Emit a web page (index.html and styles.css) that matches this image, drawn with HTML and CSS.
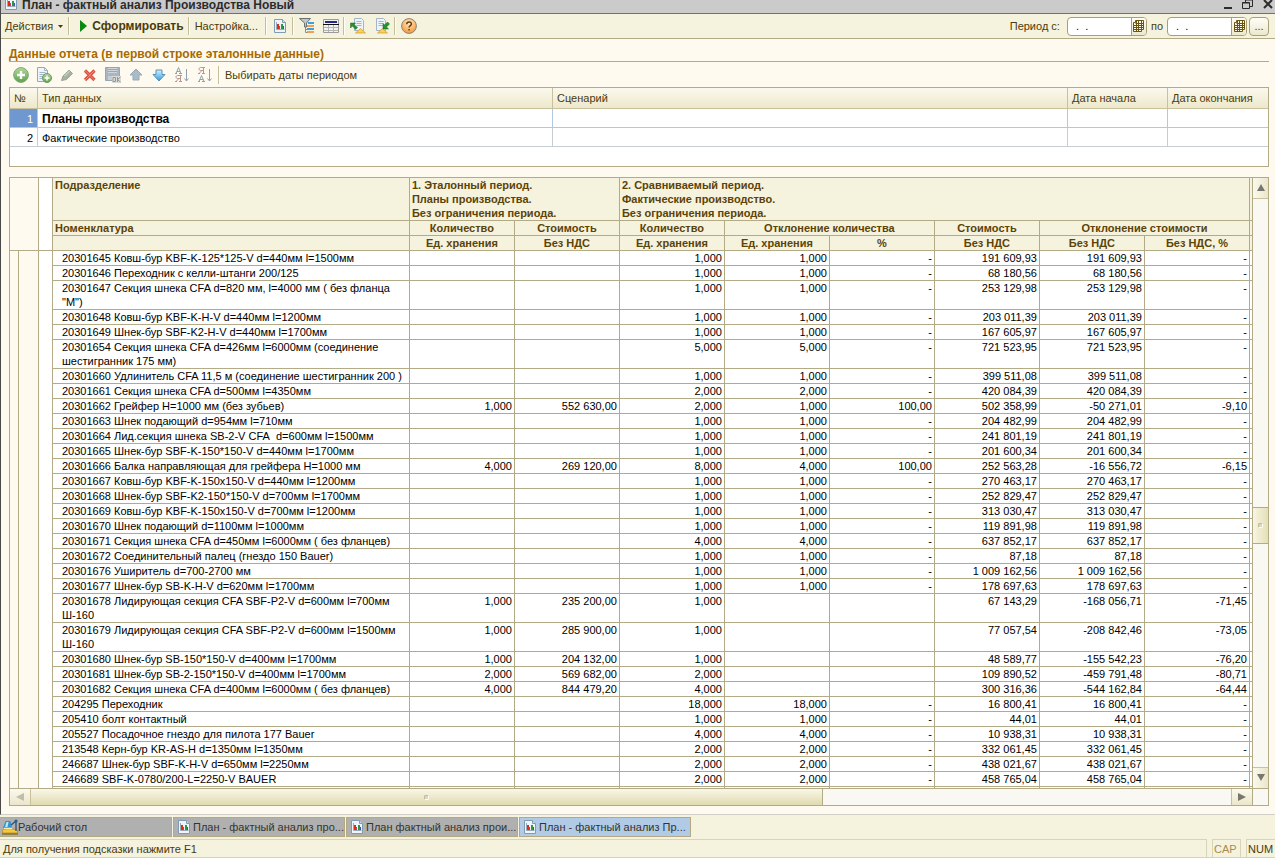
FILE: index.html
```
<!DOCTYPE html>
<html lang="ru">
<head>
<meta charset="utf-8">
<title>План - фактный анализ Производства Новый</title>
<link rel="stylesheet" href="styles.css">
</head>
<body>
<svg class="defs" aria-hidden="true">
  <defs>
    <linearGradient id="gGreen" x1="0" y1="0" x2="0" y2="1"><stop offset="0" stop-color="#b3d89a"/><stop offset="1" stop-color="#5ba34c"/></linearGradient>
    <radialGradient id="gOrange" cx=".5" cy=".3" r=".7"><stop offset="0" stop-color="#ffe9c8"/><stop offset=".5" stop-color="#fbc07a"/><stop offset="1" stop-color="#ec9a40"/></radialGradient>
    <linearGradient id="gBlue" x1="0" y1="0" x2="0" y2="1"><stop offset="0" stop-color="#d9f0fb"/><stop offset="1" stop-color="#2f9be0"/></linearGradient>
    <symbol id="report" viewBox="0 0 16 16">
      <path d="M2.500 1.500h8l3 3v10h-11z" fill="#eef5fa" stroke="#7f9cb5"/>
      <path d="M10.500 1.500v3h3" fill="#c9dbe8" stroke="#7f9cb5"/>
      <path d="M4.500 4v7.500H12.500" fill="none" stroke="#9aa8b5"/>
      <path d="M5 6h2v5H5z" fill="#e02a1c"/><path d="M7 8h1v3H7z" fill="#d03a50"/><path d="M9 6h2v5H9z" fill="#2a9a3a"/><path d="M11 8h1v3h-1z" fill="#3553b8"/>
    </symbol>
    <symbol id="sheet" viewBox="0 0 16 16">
      <path d="M4.500.500h7l2 2v10h-9z" fill="#eef4f9" stroke="#a3b6c7"/>
      <path d="M6.500 3.500h5M6.500 5.500h5M6.500 7.500h5" stroke="#a3b6c7"/>
      <path d="M5.500 15l5-4.500 5 4.500z" fill="#f7d25c" stroke="#d09a25" stroke-width=".7"/>
    </symbol>
    <symbol id="calendar" viewBox="0 0 11 12">
      <path d="M2.500.500h8v9h-2v2h-8v-9h2z" fill="#fffbe6" stroke="#6b5314"/>
      <path d="M2.500 3.500h8M0 5.500h10M0 7.500h10M0 9.500h8M3.500 1v10M5.500 1v10M8.500 1v9" stroke="#6b5314"/>
    </symbol>
  </defs>
</svg>

<div class="window">
  <header class="titlebar">
    <svg class="icon"><use href="#report"/></svg>
    <h1>План - фактный анализ Производства Новый</h1>
    <div class="window-buttons">
      <button type="button" aria-label="Свернуть"><svg width="10" height="13" viewBox="0 0 10 13"><path d="M1 8h8" stroke="#2b2b2b" stroke-width="2"/></svg></button>
      <button type="button" aria-label="Восстановить"><svg width="12" height="13" viewBox="0 0 12 13"><path d="M3.500 2V0M3.500 0H10.500V6.500H8M.500 2.500h7v6h-7zM.500 3h7" fill="none" stroke="#2b2b2b"/></svg></button>
      <button type="button" aria-label="Закрыть"><svg width="10" height="13" viewBox="0 0 10 13"><path d="M1 0l8 8M9 0L1 8" stroke="#2b2b2b" stroke-width="2"/></svg></button>
    </div>
  </header>

  <div class="toolbar main-toolbar">
    <button type="button" class="first">Действия <svg width="5" height="3" viewBox="0 0 5 3"><path d="M0 0h5L2.500 3z" fill="#4a3b0c"/></svg></button>
    <span class="sep"></span>
    <button type="button" class="run"><svg width="7" height="12" viewBox="0 0 7 12"><path d="M0 0l7 6-7 6z" fill="#078a12"/></svg>Сформировать</button>
    <span class="sep"></span>
    <button type="button" class="settings">Настройка...</button>
    <span class="sep"></span>
    <button type="button" class="tool" aria-label="Отчет"><svg class="icon"><use href="#report"/></svg></button>
    <span class="sep"></span>
    <button type="button" class="tool" aria-label="Отбор"><svg class="icon" viewBox="0 0 16 16"><path d="M9 4h6v2H9z" fill="#3aa0e0"/><path d="M8 7h7v2H8z" fill="#f0a050"/><path d="M8 10h7v2H8z" fill="#3aa0e0"/><path d="M8 13h7v2H8z" fill="#f0a050"/><path d="M6.500 5v9.500M6.500 8.500h2M6.500 11.500h2M6.500 14.500h2" fill="none" stroke="#8d8d85"/><path d="M.500.500h11L7.500 5v4h-2V5z" fill="#c3c6c6" stroke="#6c7070"/></svg></button>
    <button type="button" class="tool" aria-label="Таблица"><svg class="icon" viewBox="0 0 16 16"><path d="M.500 1.500h15v13H.500z" fill="#f3f3ee" stroke="#9a9a9a"/><path d="M2 3h12v2H2z" fill="#27278f"/><path d="M0 6.500h16" stroke="#111"/><path d="M1 9.500h14M1 12.500h14M5.500 7v7M10.500 7v7" stroke="#b4b4b4"/></svg></button>
    <span class="sep"></span>
    <button type="button" class="tool" aria-label="Загрузить настройки"><svg class="icon" viewBox="0 0 16 16"><use href="#sheet"/><path d="M.500 5h5L4 6.500 7.500 9.500l-2 2L2.500 8 .500 10z" fill="#27912a" stroke="#126c24" stroke-width=".5"/></svg></button>
    <button type="button" class="tool" aria-label="Сохранить настройки"><svg class="icon" viewBox="0 0 16 16"><g class="shift"><use href="#sheet" x="-2"/></g><path d="M9 11V5.500l1.500 1.500L13.500 4l2 2-3 3L14.500 11z" fill="#27912a" stroke="#126c24" stroke-width=".5"/></svg></button>
    <span class="sep"></span>
    <button type="button" class="tool" aria-label="Справка"><svg class="icon" viewBox="0 0 16 16"><circle cx="8" cy="8" r="7.400" fill="url(#gOrange)" stroke="#8f8377"/><path d="M5.700 6.200c0-3 4.700-2.900 4.700-.3 0 1.700-2.300 1.700-2.300 3.600M8.100 11v1.500" fill="none" stroke="#6b3d10" stroke-width="1.500"/></svg></button>

    <div class="period">
      <label for="from">Период с:</label>
      <span class="date"><input id="from" type="text" value=" .  ."><button type="button" aria-label="Календарь"><svg width="11" height="12"><use href="#calendar"/></svg></button></span>
      <label for="to">по</label>
      <span class="date"><input id="to" type="text" value=" .  ."><button type="button" aria-label="Календарь"><svg width="11" height="12"><use href="#calendar"/></svg></button></span>
      <button type="button" class="more">...</button>
    </div>
  </div>

  <main>
    <h2>Данные отчета (в первой строке эталонные данные)</h2>
    <div class="toolbar data-toolbar">
      <button type="button" class="tool" aria-label="Добавить"><svg class="icon" viewBox="0 0 16 16"><circle cx="8" cy="8" r="7.400" fill="url(#gGreen)" stroke="#86a67c"/><path d="M8 4v8M4 8h8" stroke="#fff" stroke-width="2.400"/></svg></button>
      <button type="button" class="tool" aria-label="Скопировать"><svg class="icon" viewBox="0 0 16 16"><path d="M1.500.500h7l3 3v11h-10z" fill="#eef4f9" stroke="#94a9bb"/><path d="M8.500.500v3h3M3.500 5.500h6M3.500 7.500h6M3.500 9.500h4M3.500 11.500h3" fill="none" stroke="#a3b6c7"/><circle cx="11" cy="11" r="4.500" fill="url(#gGreen)" stroke="#6f9a64"/><path d="M11 8.500v5M8.500 11h5" stroke="#fff" stroke-width="1.500"/></svg></button>
      <button type="button" class="tool" aria-label="Изменить"><svg class="icon" viewBox="0 0 16 16"><path d="M2.500 13.500l1.500-4.500 6-6 3.500 3.500-6 6z" fill="#a5b3a2" stroke="#98a595"/><path d="M5.500 9l5-5" stroke="#c6d0c2" stroke-width="1.500"/></svg></button>
      <button type="button" class="tool" aria-label="Удалить"><svg class="icon" viewBox="0 0 16 16"><path d="M3 3.500l9.500 9.500M12.500 3.500L3 13" stroke="#dc5040" stroke-width="3.200"/><path d="M3 3.500l9.500 9.500M12.500 3.500L3 13" stroke="#f68a78"/></svg></button>
      <button type="button" class="tool" aria-label="Закончить редактирование"><svg class="icon" viewBox="0 0 16 16"><path d="M.500.500h14v13H.500z" fill="#a9b6c1" stroke="#98a6b2"/><path d="M3 1h9v5H3z" fill="#cfd7dd"/><path d="M3 2.500h9M3 4.500h9" stroke="#9aa8b4"/><path d="M3 9h5v4H3z" fill="#c6ced5"/><path d="M7 9h9v7H7z" fill="#dadbd6"/><path d="M8 10.500h2.500v4H8zM12.500 10v5M15.500 10l-3 2.500 3 2.500" fill="none" stroke="#8f989e"/></svg></button>
      <button type="button" class="tool" aria-label="Вверх"><svg class="icon" viewBox="0 0 16 16"><path d="M8 2l6 6h-3v5H5V8H2z" fill="#a9bac8" stroke="#98a9b7"/></svg></button>
      <button type="button" class="tool" aria-label="Вниз"><svg class="icon" viewBox="0 0 16 16"><path d="M8 14l6-6.500h-3V3H5v4.500H2z" fill="url(#gBlue)" stroke="#5592ba"/></svg></button>
      <button type="button" class="tool" aria-label="Сортировать по возрастанию"><svg class="icon" viewBox="0 0 16 16"><path d="M1 6.500h2M5 6.500h3M2 6.500l2.500-6 2.500 6M3 4.500h3" fill="none" stroke="#8fa1b0"/><path d="M1 14.500h2M5 14.500h3M6.500 14V8.500H3.500C1.500 8.500 1.500 11.500 3.500 11.500h3M4.500 12L2.500 14M6 8.500h2" fill="none" stroke="#bb9790"/><path d="M12.500 2v12M10.500 11.500l2 2.500 2-2.500" fill="none" stroke="#8fa1b0"/></svg></button>
      <button type="button" class="tool" aria-label="Сортировать по убыванию"><svg class="icon" viewBox="0 0 16 16"><path d="M1 6.500h2M5 6.500h3M6.500 6V.500H3.500C1.500.500 1.500 3.500 3.500 3.500h3M4.500 4L2.500 6M6 .500h2" fill="none" stroke="#bb9790"/><path d="M1 14.500h2M5 14.500h3M2 14.500l2.500-6 2.500 6M3 12.500h3" fill="none" stroke="#8fa1b0"/><path d="M12.500 2v12M10.500 11.500l2 2.500 2-2.500" fill="none" stroke="#8fa1b0"/></svg></button>
      <span class="sep"></span>
      <button type="button">Выбирать даты периодом</button>
    </div>

    <div class="grid-box">
      <table class="data-grid">
        <colgroup><col class="c-num"><col><col><col class="c-date"><col class="c-date"></colgroup>
        <thead><tr><th>№</th><th>Тип данных</th><th>Сценарий</th><th>Дата начала</th><th>Дата окончания</th></tr></thead>
        <tbody>
          <tr class="selected"><td>1</td><td>Планы производства</td><td></td><td></td><td></td></tr>
          <tr><td>2</td><td>Фактические производство</td><td></td><td></td><td></td></tr>
        </tbody>
      </table>
    </div>

    <div class="report">
      <div class="sheet">
        <table class="report-table">
          <colgroup><col class="g1"><col class="g2"><col class="g3"><col><col class="n"><col class="n"><col class="n"><col class="n"><col class="n"><col class="n"><col class="n"><col class="n"><col class="tail"></colgroup>
          <thead>
            <tr class="periods"><td colspan="2" rowspan="3" class="gutter"></td><td rowspan="3" class="blank"></td><th>Подразделение</th><th colspan="2">1. Эталонный период.<br>Планы производства.<br>Без ограничения периода.</th><th colspan="6">2. Сравниваемый период.<br>Фактические производство.<br>Без ограничения периода.</th><th class="edge"></th></tr>
            <tr><th class="left">Номенклатура</th><th>Количество</th><th>Стоимость</th><th>Количество</th><th colspan="2">Отклонение количества</th><th>Стоимость</th><th colspan="2">Отклонение стоимости</th><th class="edge"></th></tr>
            <tr><th></th><th>Ед. хранения</th><th>Без НДС</th><th>Ед. хранения</th><th>Ед. хранения</th><th>%</th><th>Без НДС</th><th>Без НДС</th><th>Без НДС, %</th><th class="edge"></th></tr>
          </thead>
          <tbody>
<tr><td class="gutter" rowspan="36"></td><td class="gutter" rowspan="36"></td><td class="blank" rowspan="36"></td><th>20301645 Ковш-бур KBF-K-125*125-V d=440мм l=1500мм</th><td></td><td></td><td>1,000</td><td>1,000</td><td>-</td><td>191 609,93</td><td>191 609,93</td><td>-</td><td></td></tr>
<tr><th>20301646 Переходник с келли-штанги 200/125</th><td></td><td></td><td>1,000</td><td>1,000</td><td>-</td><td>68 180,56</td><td>68 180,56</td><td>-</td><td></td></tr>
<tr><th>20301647 Секция шнека CFA d=820 мм, l=4000 мм ( без фланца<br>"М")</th><td></td><td></td><td>1,000</td><td>1,000</td><td>-</td><td>253 129,98</td><td>253 129,98</td><td>-</td><td></td></tr>
<tr><th>20301648 Ковш-бур KBF-K-H-V d=440мм l=1200мм</th><td></td><td></td><td>1,000</td><td>1,000</td><td>-</td><td>203 011,39</td><td>203 011,39</td><td>-</td><td></td></tr>
<tr><th>20301649 Шнек-бур SBF-K2-H-V d=440мм l=1700мм</th><td></td><td></td><td>1,000</td><td>1,000</td><td>-</td><td>167 605,97</td><td>167 605,97</td><td>-</td><td></td></tr>
<tr><th>20301654 Секция шнека CFA d=426мм l=6000мм (соединение<br>шестигранник 175 мм)</th><td></td><td></td><td>5,000</td><td>5,000</td><td>-</td><td>721 523,95</td><td>721 523,95</td><td>-</td><td></td></tr>
<tr><th>20301660 Удлинитель CFA 11,5 м (соединение шестигранник 200 )</th><td></td><td></td><td>1,000</td><td>1,000</td><td>-</td><td>399 511,08</td><td>399 511,08</td><td>-</td><td></td></tr>
<tr><th>20301661 Секция шнека CFA d=500мм l=4350мм</th><td></td><td></td><td>2,000</td><td>2,000</td><td>-</td><td>420 084,39</td><td>420 084,39</td><td>-</td><td></td></tr>
<tr><th>20301662 Грейфер H=1000 мм (без зубьев)</th><td>1,000</td><td>552 630,00</td><td>2,000</td><td>1,000</td><td>100,00</td><td>502 358,99</td><td>-50 271,01</td><td>-9,10</td><td></td></tr>
<tr><th>20301663 Шнек подающий d=954мм l=710мм</th><td></td><td></td><td>1,000</td><td>1,000</td><td>-</td><td>204 482,99</td><td>204 482,99</td><td>-</td><td></td></tr>
<tr><th>20301664 Лид.секция шнека SB-2-V CFA&nbsp; d=600мм l=1500мм</th><td></td><td></td><td>1,000</td><td>1,000</td><td>-</td><td>241 801,19</td><td>241 801,19</td><td>-</td><td></td></tr>
<tr><th>20301665 Шнек-бур SBF-K-150*150-V d=440мм l=1700мм</th><td></td><td></td><td>1,000</td><td>1,000</td><td>-</td><td>201 600,34</td><td>201 600,34</td><td>-</td><td></td></tr>
<tr><th>20301666 Балка направляющая для грейфера H=1000 мм</th><td>4,000</td><td>269 120,00</td><td>8,000</td><td>4,000</td><td>100,00</td><td>252 563,28</td><td>-16 556,72</td><td>-6,15</td><td></td></tr>
<tr><th>20301667 Ковш-бур KBF-K-150x150-V d=440мм l=1200мм</th><td></td><td></td><td>1,000</td><td>1,000</td><td>-</td><td>270 463,17</td><td>270 463,17</td><td>-</td><td></td></tr>
<tr><th>20301668 Шнек-бур SBF-K2-150*150-V d=700мм l=1700мм</th><td></td><td></td><td>1,000</td><td>1,000</td><td>-</td><td>252 829,47</td><td>252 829,47</td><td>-</td><td></td></tr>
<tr><th>20301669 Ковш-бур KBF-K-150x150-V d=700мм l=1200мм</th><td></td><td></td><td>1,000</td><td>1,000</td><td>-</td><td>313 030,47</td><td>313 030,47</td><td>-</td><td></td></tr>
<tr><th>20301670 Шнек подающий d=1100мм l=1000мм</th><td></td><td></td><td>1,000</td><td>1,000</td><td>-</td><td>119 891,98</td><td>119 891,98</td><td>-</td><td></td></tr>
<tr><th>20301671 Секция шнека CFA d=450мм l=6000мм ( без фланцев)</th><td></td><td></td><td>4,000</td><td>4,000</td><td>-</td><td>637 852,17</td><td>637 852,17</td><td>-</td><td></td></tr>
<tr><th>20301672 Соединительный палец (гнездо 150 Bauer)</th><td></td><td></td><td>1,000</td><td>1,000</td><td>-</td><td>87,18</td><td>87,18</td><td>-</td><td></td></tr>
<tr><th>20301676 Уширитель d=700-2700 мм</th><td></td><td></td><td>1,000</td><td>1,000</td><td>-</td><td>1 009 162,56</td><td>1 009 162,56</td><td>-</td><td></td></tr>
<tr><th>20301677 Шнек-бур SB-K-H-V d=620мм l=1700мм</th><td></td><td></td><td>1,000</td><td>1,000</td><td>-</td><td>178 697,63</td><td>178 697,63</td><td>-</td><td></td></tr>
<tr><th>20301678 Лидирующая секция CFA SBF-P2-V d=600мм l=700мм<br>Ш-160</th><td>1,000</td><td>235 200,00</td><td>1,000</td><td></td><td></td><td>67 143,29</td><td>-168 056,71</td><td>-71,45</td><td></td></tr>
<tr><th>20301679 Лидирующая секция CFA SBF-P2-V d=600мм l=1500мм<br>Ш-160</th><td>1,000</td><td>285 900,00</td><td>1,000</td><td></td><td></td><td>77 057,54</td><td>-208 842,46</td><td>-73,05</td><td></td></tr>
<tr><th>20301680 Шнек-бур SB-150*150-V d=400мм l=1700мм</th><td>1,000</td><td>204 132,00</td><td>1,000</td><td></td><td></td><td>48 589,77</td><td>-155 542,23</td><td>-76,20</td><td></td></tr>
<tr><th>20301681 Шнек-бур SB-2-150*150-V d=400мм l=1700мм</th><td>2,000</td><td>569 682,00</td><td>2,000</td><td></td><td></td><td>109 890,52</td><td>-459 791,48</td><td>-80,71</td><td></td></tr>
<tr><th>20301682 Секция шнека CFA d=400мм l=6000мм ( без фланцев)</th><td>4,000</td><td>844 479,20</td><td>4,000</td><td></td><td></td><td>300 316,36</td><td>-544 162,84</td><td>-64,44</td><td></td></tr>
<tr><th>204295 Переходник</th><td></td><td></td><td>18,000</td><td>18,000</td><td>-</td><td>16 800,41</td><td>16 800,41</td><td>-</td><td></td></tr>
<tr><th>205410 болт контактный</th><td></td><td></td><td>1,000</td><td>1,000</td><td>-</td><td>44,01</td><td>44,01</td><td>-</td><td></td></tr>
<tr><th>205527 Посадочное гнездо для пилота 177 Bauer</th><td></td><td></td><td>4,000</td><td>4,000</td><td>-</td><td>10 938,31</td><td>10 938,31</td><td>-</td><td></td></tr>
<tr><th>213548 Керн-бур KR-AS-H d=1350мм l=1350мм</th><td></td><td></td><td>2,000</td><td>2,000</td><td>-</td><td>332 061,45</td><td>332 061,45</td><td>-</td><td></td></tr>
<tr><th>246687 Шнек-бур SBF-K-H-V d=650мм l=2250мм</th><td></td><td></td><td>2,000</td><td>2,000</td><td>-</td><td>438 021,67</td><td>438 021,67</td><td>-</td><td></td></tr>
<tr><th>246689 SBF-K-0780/200-L=2250-V BAUER</th><td></td><td></td><td>2,000</td><td>2,000</td><td>-</td><td>458 765,04</td><td>458 765,04</td><td>-</td><td></td></tr>
<tr><th></th><td></td><td></td><td></td><td></td><td></td><td></td><td></td><td></td><td></td></tr>
          </tbody>
        </table>
      </div>
      <div class="vscroll">
        <button type="button" aria-label="Вверх"><svg width="8" height="8" viewBox="0 0 8 8"><path d="M4 0l4 7H0z" fill="#77776f"/></svg></button>
        <div class="track"><div class="thumb"><i></i></div></div>
        <button type="button" aria-label="Вниз"><svg width="8" height="8" viewBox="0 0 8 8"><path d="M4 7l4-7H0z" fill="#77776f"/></svg></button>
      </div>
      <div class="hscroll">
        <button type="button" aria-label="Влево"><svg width="8" height="8" viewBox="0 0 8 8"><path d="M0 4l8-4v8z" fill="#c0bda8"/></svg></button>
        <div class="track"><div class="thumb"><i></i></div></div>
        <button type="button" aria-label="Вправо"><svg width="8" height="8" viewBox="0 0 8 8"><path d="M8 4L0 0v8z" fill="#77776f"/></svg></button>
      </div>
      <div class="corner"></div>
    </div>
  </main>
</div>

<nav class="taskbar">
  <button type="button" class="desk"><svg class="icon" viewBox="0 0 16 16"><path d="M.500 11.500c0-2 15-2 15 0V14H.500z" fill="#f2c93c" stroke="#a87a14" stroke-width=".6"/><path d="M0 15h16" stroke="#6e5512"/><path d="M3.500 2h5l1.500 7H1z" fill="#2f94d0"/><path d="M4.500 3h2l-1 5H3z" fill="#bfe6f8"/><path d="M2 9.500h8" stroke="#f8eeb0" stroke-width="1.500"/><path d="M9 6l5-4v10" fill="none" stroke="#27507b" stroke-width="1.300"/><circle cx="14" cy="2" r="1.600" fill="#245f8f"/></svg>Рабочий стол</button>
  <button type="button"><svg class="icon"><use href="#report"/></svg>План - фактный анализ про...</button>
  <button type="button"><svg class="icon"><use href="#report"/></svg>План фактный анализ прои...</button>
  <button type="button" class="active"><svg class="icon"><use href="#report"/></svg>План - фактный анализ Пр...</button>
</nav>
<footer class="statusbar">
  <span class="hint">Для получения подсказки нажмите F1</span>
  <span class="ind off">CAP</span>
  <span class="ind">NUM</span>
</footer>
</body>
</html>
```
FILE: styles.css
```
* { box-sizing: border-box; }

body {
  margin: 0;
  height: 100vh;
  display: flex;
  flex-direction: column;
  overflow: hidden;
  background: #f5f2dd;
  color: #4a3b0c;
  font: 11px/14px "Liberation Sans", Arial, sans-serif;
}

button {
  display: inline-flex;
  align-items: center;
  justify-content: center;
  margin: 0;
  padding: 0;
  border: 0;
  background: none;
  color: inherit;
  font: inherit;
  white-space: nowrap;
}

.defs { position: absolute; width: 0; height: 0; }
.icon { width: 16px; height: 16px; flex: none; }

.window {
  flex: 1;
  min-height: 0;
  display: flex;
  flex-direction: column;
  border-left: 1px solid #4a4a4a;
  border-bottom: 1px solid #d0cfc8;
  background: #fffaf0;
}

/* title bar */
.titlebar {
  flex: none;
  height: 14px;
  display: flex;
  align-items: flex-start;
  gap: 3px;
  padding-left: 2px;
  overflow: hidden;
  background: #cbcbcb;
  border-bottom: 1px solid #707070;
}
.titlebar .icon { margin-top: -5px; }
.titlebar h1 {
  flex: 1;
  margin: 0;
  color: #2b2b2b;
  font-size: 12px;
  line-height: 10px;
}
.window-buttons { display: flex; gap: 9px; padding-right: 2px; }

/* toolbars */
.toolbar { display: flex; align-items: center; flex: none; }
.main-toolbar {
  height: 25px;
  padding-left: 4px;
  background: #f5f2dd;
  border-bottom: 1px solid #b3ab85;
}
.main-toolbar .first { gap: 5px; padding-right: 1px; }
.run { gap: 5px; padding-left: 5px; font-weight: bold; font-size: 12px; }
.settings { padding-right: 3px; }
.sep {
  width: 2px;
  height: 18px;
  margin: 0 5px 0 4px;
  border-left: 1px solid #c5be9a;
  border-right: 1px solid #fff;
}
.main-toolbar .tool + .tool { margin-left: 8px; }

.period {
  display: flex;
  align-items: center;
  gap: 4px;
  margin-left: auto;
  padding-right: 6px;
}
.period label:first-child { margin-right: 3px; }
.date {
  display: flex;
  width: 80px;
  height: 19px;
  border: 1px solid #a99f75;
  border-radius: 4px;
  background: #fff;
  overflow: hidden;
}
.date input {
  flex: 1;
  min-width: 0;
  padding: 0 0 0 5px;
  border: 0;
  background: none;
  color: #000;
  font: inherit;
  white-space: pre;
}
.date button, .more {
  background: linear-gradient(#fffef8, #ece8cd);
}
.date button { width: 15px; border-left: 1px solid #a99f75; }
.more {
  width: 20px;
  height: 19px;
  margin-left: -2px;
  border: 1px solid #a99f75;
  border-radius: 4px;
}

/* main area */
main {
  flex: 1;
  min-height: 0;
  display: flex;
  flex-direction: column;
  padding: 8px 6px 8px 8px;
}
h2 {
  flex: none;
  margin: 0;
  color: #a66a00;
  border-bottom: 1px solid #b3ab85;
  font-size: 12px;
  line-height: 14px;
}
.data-toolbar { height: 25px; padding: 1px 0 0 4px; }
.data-toolbar .tool { margin-right: 7px; }
.data-toolbar .sep { margin-left: -2px; }

/* data types grid */
.grid-box {
  flex: none;
  height: 80px;
  border: 1px solid #b3ab85;
  background: #fff;
}
.data-grid { width: 100%; table-layout: fixed; border-collapse: separate; border-spacing: 0; }
.c-num { width: 28px; }
.c-date { width: 100px; }
.data-grid th {
  height: 21px;
  padding: 0 4px;
  text-align: left;
  font-weight: normal;
  background: linear-gradient(#fbf9ee, #ede8cb);
  border-right: 1px solid #c9c19c;
  border-bottom: 1px solid #c9c19c;
}
.data-grid td {
  height: 19px;
  padding: 1px 4px 0;
  color: #000;
  border-right: 1px solid #c5ced4;
  border-bottom: 1px solid #c5ced4;
}
.data-grid td:first-child { text-align: right; }
.data-grid .selected td { border-color: #b2c8e2; font-weight: bold; font-size: 12px; }
.data-grid .selected td:first-child { background: #6f97d0; color: #fff; font-weight: normal; font-size: 11px; }
.data-grid tr > :last-child { border-right: 0; }

/* report */
.report {
  flex: 1;
  min-height: 0;
  display: grid;
  grid-template-columns: 1fr 17px;
  grid-template-rows: 1fr 17px;
  margin-top: 10px;
  border: 1px solid #b3ab85;
  border-right: 0;
}
.sheet { min-height: 0; overflow: hidden; background: #fff; }
.report-table { width: 100%; table-layout: fixed; border-collapse: separate; border-spacing: 0; }
.g1 { width: 9px; }
.g2 { width: 20px; }
.g3 { width: 14px; }
.n { width: 105px; }
.tail { width: 2px; }
.report-table th, .report-table td {
  height: 15px;
  padding: 0 2px;
  vertical-align: top;
  text-align: right;
  white-space: nowrap;
  border-right: 1px solid #b3ab85;
  border-bottom: 1px solid #b3ab85;
}
.report-table .gutter { background: #fffaf0; padding: 0; }
.report-table .blank { background: #fff; padding: 0; }
.report-table thead th { background: #f5f2dd; text-align: center; color: #5c4308; }
.report-table .periods th, .report-table thead .left { text-align: left; }
.report-table tbody { color: #000; }
.report-table tbody th { padding-left: 9px; font-weight: normal; text-align: left; }
.report-table tr > td:last-child, .report-table .edge { border-right: 0; padding: 0; }

/* scroll bars */
.vscroll, .hscroll { display: flex; background: #f9f8f3; }
.vscroll { flex-direction: column; border-left: 1px solid #b3ab85; border-right: 1px solid #b3ab85; }
.hscroll { border-top: 1px solid #b3ab85; }
.corner {
  border: 1px solid #b3ab85;
  border-bottom: 0;
  background: #f9f8f3;
}
.vscroll button { flex: none; height: 21px; background: linear-gradient(90deg, #fbf9ee, #ebe6ca); }
.vscroll button:first-child { border-bottom: 1px solid #c9c19c; }
.vscroll button:last-child { border-top: 1px solid #c9c19c; }
.hscroll button { flex: none; width: 21px; background: linear-gradient(#fbf9ee, #ebe6ca); }
.hscroll button:first-child { border-right: 1px solid #c9c19c; }
.hscroll button:last-child { border-left: 1px solid #c9c19c; }
.track { flex: 1; display: flex; }
.vscroll .track { flex-direction: column; }
.thumb { display: flex; align-items: center; justify-content: center; }
.thumb i {
  width: 5px;
  height: 5px;
  border: 1px solid #c0b994;
  border-right-color: #fff;
  border-bottom-color: #fff;
  border-radius: 2px;
  background: #dcd8bc;
}
.vscroll .thumb {
  height: 37px;
  margin-top: 308px;
  border: solid #b3ab85;
  border-width: 1px 0;
  background: linear-gradient(90deg, #f8f5e2, #e4dfb8);
}
.hscroll .thumb {
  width: 66%;
  border-right: 1px solid #b3ab85;
  background: linear-gradient(#f9f7e8, #e0dab0);
}

/* open windows */
.taskbar {
  flex: none;
  display: flex;
  gap: 1px;
  padding: 2px 0;
}
.taskbar button {
  width: 172px;
  height: 20px;
  justify-content: flex-start;
  gap: 1px;
  padding-left: 2px;
  border: 1px solid #b3a983;
  background: #b0b0b0;
  color: #33332f;
}
.taskbar .desk { gap: 0; border-left: 0; }
.taskbar .active { background: #b1cbe6; }

/* status bar */
.statusbar {
  flex: none;
  height: 19px;
  display: flex;
  gap: 5px;
  border-bottom: 1px solid #d5d2bd;
}
.statusbar span { padding: 2px 3px; border: 1px solid #d8d4bb; border-bottom: 0; }
.statusbar .hint { flex: 1; border-left: 0; }
.statusbar .ind { width: 29px; padding: 2px 1px; }
.statusbar .ind:last-child { border-right: 0; }
.statusbar .off { color: #a58d52; }
```
